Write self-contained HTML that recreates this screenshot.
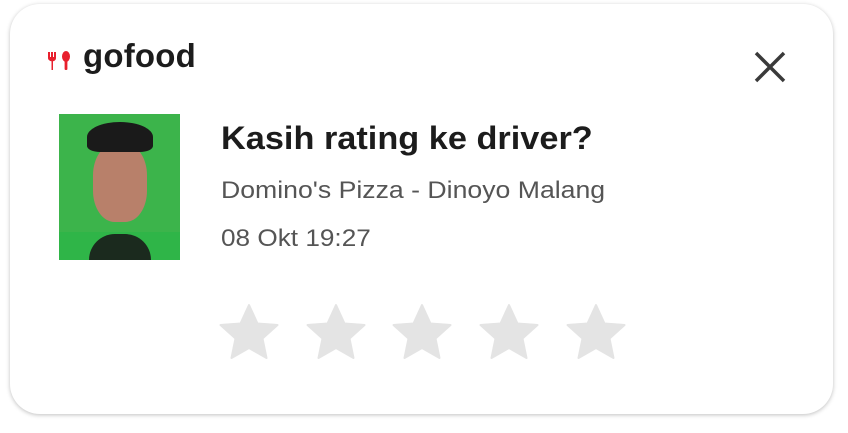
<!DOCTYPE html>
<html><head><style>
body{margin:0;width:848px;height:433px;background:#fff;font-family:"Liberation Sans",sans-serif;position:relative;overflow:hidden}
.card{position:absolute;left:10px;top:4px;width:823px;height:410px;border-radius:30px;background:#fff;box-shadow:0 1px 4px rgba(0,0,0,.25)}
.t{position:absolute;white-space:nowrap;transform-origin:0 50%}
</style></head><body>
<div class="card"></div>
<svg class="t" style="left:47px;top:50px" width="28" height="22" viewBox="0 0 28 22">
<g fill="#e8202d"><path d="M1 2h2v5h1V2h2v5h1V2h2v6c0 2-1.5 3-3 3.3V20H4.5v-8.7C3 11 1 10 1 8z"/><ellipse cx="19" cy="6.5" rx="4" ry="5.5"/><rect x="17.6" y="10" width="2.8" height="10" rx="1"/></g></svg>
<div class="t" style="left:83px;top:37px;font-size:33px;font-weight:bold;color:#1c1c1c;letter-spacing:0.2px">gofood</div>
<svg class="t" style="left:754px;top:51px" width="32" height="32"><path d="M2 2L30 30M30 2L2 30" stroke="#3a3a3a" stroke-width="3.5"/></svg>
<div class="t" style="left:59px;top:114px;width:121px;height:146px;background:#3cb44b;overflow:hidden">
<div style="position:absolute;left:0;right:0;bottom:0;height:28px;background:#2fb548"></div>
<div style="position:absolute;left:30px;bottom:0;width:62px;height:26px;background:#1b2a1e;border-radius:30px 30px 0 0"></div>
<div style="position:absolute;left:34px;top:30px;width:54px;height:78px;background:#b8806a;border-radius:40%"></div>
<div style="position:absolute;left:28px;top:8px;width:66px;height:30px;background:#1a1a1a;border-radius:50% 50% 20% 20%"></div>
</div>
<div class="t" style="left:221px;top:120px;font-size:32px;font-weight:bold;color:#1c1c1c;transform:scaleX(1.072)">Kasih rating ke driver?</div>
<div class="t" style="left:221px;top:177px;font-size:24px;color:#555;transform:scaleX(1.11)">Domino's Pizza - Dinoyo Malang</div>
<div class="t" style="left:221px;top:225px;font-size:24px;color:#555;transform:scaleX(1.09)">08 Okt 19:27</div>
<svg class="t" style="left:0;top:300px" width="848" height="70">
<defs><path id="s" d="M0,-29 L8.5,-10.5 L28.5,-9 L13.5,4.5 L17.5,24 L0,14 L-17.5,24 L-13.5,4.5 L-28.5,-9 L-8.5,-10.5Z" fill="#e4e4e4" stroke="#e4e4e4" stroke-width="2" stroke-linejoin="round"/></defs>
<use href="#s" x="249" y="34"/><use href="#s" x="336" y="34"/><use href="#s" x="422" y="34"/><use href="#s" x="509" y="34"/><use href="#s" x="596" y="34"/>
</svg>
</body></html>
